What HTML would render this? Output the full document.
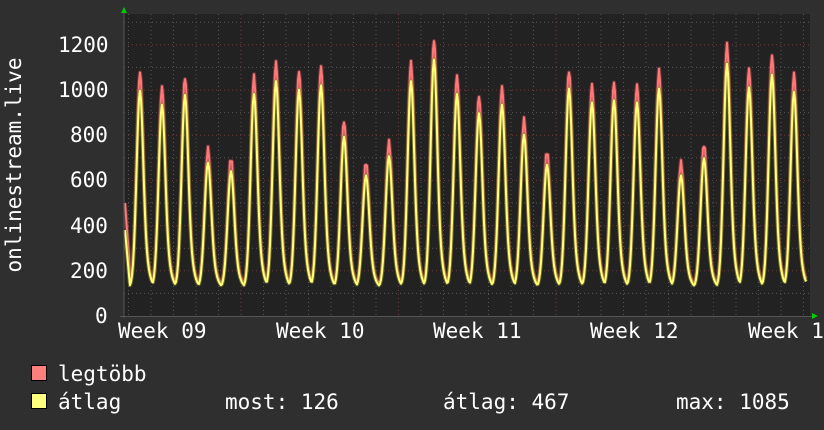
<!DOCTYPE html>
<html><head><meta charset="utf-8"><style>
html,body{margin:0;padding:0;background:#2f2f2f;}
body{width:824px;height:430px;overflow:hidden;position:relative;font-family:"DejaVu Sans Mono","Liberation Mono",monospace;color:#fff;}
.t{position:absolute;font-size:21px;line-height:21px;white-space:pre;}
.sq{position:absolute;width:14px;height:14px;border:1px solid #000;}
</style></head><body>
<svg id="g" width="824" height="430" style="position:absolute;left:0;top:0">
<rect x="124" y="14" width="686" height="302" fill="#222"/>
<g id="grid"></g>
<path id="rs" fill="none" stroke="#a04848" stroke-width="4" stroke-linejoin="round" opacity="0.6"/>
<path id="r" fill="none" stroke="#ff7878" stroke-width="2" stroke-linejoin="round"/>
<path id="ys" fill="none" stroke="#8a8a30" stroke-width="4" stroke-linejoin="round" opacity="0.6"/>
<path id="y" fill="none" stroke="#ffff78" stroke-width="2" stroke-linejoin="round"/>
<line x1="124" y1="12" x2="124" y2="318" stroke="#555" stroke-width="1"/>
<line x1="120" y1="316.5" x2="812" y2="316.5" stroke="#555" stroke-width="1"/>
<polygon points="121,13 127,13 124,7" fill="#0c0"/>
<polygon points="812,313 812,319 818,316" fill="#0c0"/>
<text x="0" y="0" transform="translate(21,165) rotate(-90)" text-anchor="middle" font-family="DejaVu Sans Mono,monospace" font-size="21" fill="#fff">onlinestream.live</text>
</svg>
<div class="t" style="left:58px;top:35px">1200</div>
<div class="t" style="left:58px;top:80px">1000</div>
<div class="t" style="left:70px;top:125px">800</div>
<div class="t" style="left:70px;top:170px">600</div>
<div class="t" style="left:70px;top:216px">400</div>
<div class="t" style="left:70px;top:261px">200</div>
<div class="t" style="left:95px;top:306px">0</div>
<div class="t" style="left:118px;top:321px">Week 09</div>
<div class="t" style="left:276px;top:321px">Week 10</div>
<div class="t" style="left:433px;top:321px">Week 11</div>
<div class="t" style="left:590px;top:321px">Week 12</div>
<div class="t" style="left:748px;top:321px">Week 13</div>
<div class="sq" style="left:31px;top:365px;background:#ff7f7f"></div>
<div class="sq" style="left:31px;top:393px;background:#ffff7f"></div>
<div class="t" style="left:58px;top:364px">legtöbb</div>
<div class="t" style="left:58px;top:392px">átlag</div>
<div class="t" style="left:225px;top:392px">most: 126</div>
<div class="t" style="left:443px;top:392px">átlag: 467</div>
<div class="t" style="left:676px;top:392px">max: 1085</div>
<script>
var g=document.getElementById('grid'),s='';
function Y(v){return 316-v*0.226;}
for(var v=100;v<=1300;v+=100){var y=Y(v);s+='<line x1="124" x2="810" y1="'+y+'" y2="'+y+'" stroke="'+(v%200==0?'#6a3a3a':'#555')+'" stroke-dasharray="1,3"/>';}
for(var x=128.5;x<810;x+=22.5){s+='<line y1="14" y2="316" x1="'+x+'" x2="'+x+'" stroke="#555" stroke-dasharray="1,3"/>';}
for(var x=241;x<810;x+=157.5){s+='<line y1="14" y2="316" x1="'+x+'" x2="'+x+'" stroke="#7a3a3a" stroke-dasharray="1,3"/>';}
g.innerHTML=s;
var pk=[[140,1065],[162,1000],[185,1045],[208,730],[231,690],[254,1050],[276,1110],[299,1070],[321,1090],[344,850],[366,670],[389,760],[411,1110],[434,1210],[457,1050],[479,960],[502,1000],[524,860],[547,720],[569,1075],[592,1010],[614,1020],[637,1010],[659,1075],[681,670],[704,750],[727,1190],[749,1080],[772,1140],[794,1060]];
function val(x,avg){
 var best=0;
 for(var i=0;i<pk.length;i++){var d=x-pk[i][0];
  var f;
  if(d<0){f=Math.exp(-Math.pow(d/4.8,2));}
  else{f=Math.exp(-Math.pow(d/4.2,2))*0.7+0.3*Math.exp(-Math.pow(d/8,2));}
  var h=pk[i][1]*(avg?0.95:1)-140;
  var j=avg?0:Math.abs(Math.sin(x*1.7))*25*f;
  best=Math.max(best,h*f+j);}
 var base=avg?125:135;
 return base+best;
}
var pr='',py='';
for(var x=125;x<=806;x++){
 var vr=val(x,0),vy=val(x,1);
 if(x<130){vr=Math.max(vr,500-(x-125)*60);vy=Math.max(vy,380-(x-125)*50);}
 pr+=(x==125?'M':'L')+x+','+Y(vr).toFixed(1);
 py+=(x==125?'M':'L')+x+','+Y(vy).toFixed(1);
}
['r','rs'].forEach(function(id){document.getElementById(id).setAttribute('d',pr);});
['y','ys'].forEach(function(id){document.getElementById(id).setAttribute('d',py);});
</script>
</body></html>
